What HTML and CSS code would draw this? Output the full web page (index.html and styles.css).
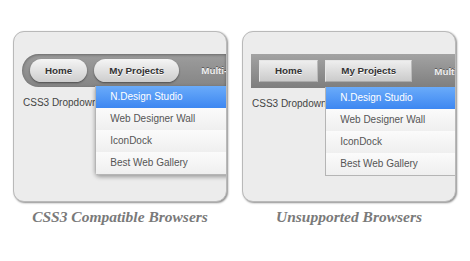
FILE: index.html
```html
<!DOCTYPE html>
<html lang="en">
<head>
    <meta charset="UTF-8">
    <title>CSS3 Dropdown Menu</title>
    <link rel="stylesheet" href="styles.css">
</head>
<body>
    <div class="showcase">
        <figure class="demo">
            <div class="card">
                <div class="nav nav-css3">
                    <span class="btn">Home</span>
                    <span class="btn btn-open">My Projects
                        <ul class="menu">
                            <li class="active">N.Design Studio</li>
                            <li>Web Designer Wall</li>
                            <li>IconDock</li>
                            <li>Best Web Gallery</li>
                        </ul>
                    </span>
                    <span class="nav-link">Multi-Level Menu</span>
                </div>
                <p class="note">CSS3 Dropdown Menu</p>
            </div>
            <figcaption>CSS3 Compatible Browsers</figcaption>
        </figure>

        <figure class="demo">
            <div class="card">
                <div class="nav nav-plain">
                    <span class="btn">Home</span>
                    <span class="btn btn-open">My Projects
                        <ul class="menu">
                            <li class="active">N.Design Studio</li>
                            <li>Web Designer Wall</li>
                            <li>IconDock</li>
                            <li>Best Web Gallery</li>
                        </ul>
                    </span>
                    <span class="nav-link">Multi-Level Menu</span>
                </div>
                <p class="note">CSS3 Dropdown Menu</p>
            </div>
            <figcaption>Unsupported Browsers</figcaption>
        </figure>
    </div>
</body>
</html>
```

FILE: styles.css
```css
body {
    margin: 0;
    background: #fff;
    font-family: "Liberation Sans", Arial, sans-serif;
}
.showcase {
    display: flex;
    gap: 15px;
    padding: 31px 0 0 13px;
}
.demo {
    margin: 0;
    width: 214px;
}
.card {
    box-sizing: border-box;
    height: 171px;
    background: #ececec;
    border: 1px solid #b9b9b9;
    border-radius: 11px;
    box-shadow: 1px 1px 2px rgba(0, 0, 0, 0.45);
    overflow: hidden;
    padding: 22px 0 0 8px;
}
.nav {
    box-sizing: border-box;
    display: flex;
    align-items: center;
    gap: 7px;
    height: 33px;
    padding-left: 8px;
}
.nav-css3 {
    border-radius: 17px 0 0 17px;
    background: linear-gradient(#9d9d9d, #858585);
    box-shadow: inset 0 1px 3px rgba(0, 0, 0, 0.35);
}
.nav-plain {
    height: 34px;
    background: linear-gradient(#a3a3a3, #7e7e7e);
}
.btn {
    position: relative;
    flex-shrink: 0;
    box-sizing: border-box;
    height: 23px;
    line-height: 23px;
    padding: 0 15px;
    font-size: 9.8px;
    font-weight: bold;
    color: #333;
    text-shadow: 0 1px 0 #fff;
    background: linear-gradient(#f5f5f5, #cdcdcd);
}
.nav-css3 .btn {
    border-radius: 12px;
    box-shadow: 0 1px 2px rgba(0, 0, 0, 0.45);
}
.nav-plain .btn {
    height: 22px;
    line-height: 20px;
    border: 1px solid #e6e6e6;
    border-right-color: #bbb;
    border-bottom-color: #aaa;
    background: linear-gradient(#eeeeee, #cbcbcb);
}
.nav-link {
    min-width: 0;
    overflow: hidden;
    margin-left: 15px;
    font-size: 9.8px;
    font-weight: bold;
    color: #eee;
    white-space: nowrap;
    text-shadow: 0 -1px 0 rgba(0, 0, 0, 0.4);
}
.menu {
    position: absolute;
    top: 27px;
    left: 0;
    width: 150px;
    margin: 0;
    padding: 0;
    list-style: none;
    text-shadow: none;
    border: 1px solid #b5b5b5;
    border-top: none;
    background: #f2f2f2;
}
.nav-css3 .menu {
    left: 1px;
    border-radius: 0 0 5px 5px;
    box-shadow: 0 2px 4px rgba(0, 0, 0, 0.35);
}
.nav-plain .menu {
    top: 26px;
    left: -1px;
}
.menu li {
    height: 22px;
    line-height: 21px;
    padding-left: 14px;
    font-size: 10px;
    font-weight: normal;
    color: #555;
    background: linear-gradient(#fbfbfb, #efefef);
}
.menu li.active {
    color: #fff;
    background: linear-gradient(#6aabfa, #3d87f1);
}
.note {
    margin: 10px 0 0 1px;
    font-size: 10px;
    color: #444;
}
figcaption {
    margin-top: 6px;
    text-align: center;
    font-family: "Liberation Serif", "Times New Roman", serif;
    font-style: italic;
    font-weight: bold;
    font-size: 15.5px;
    color: #7a7a7a;
}
```
